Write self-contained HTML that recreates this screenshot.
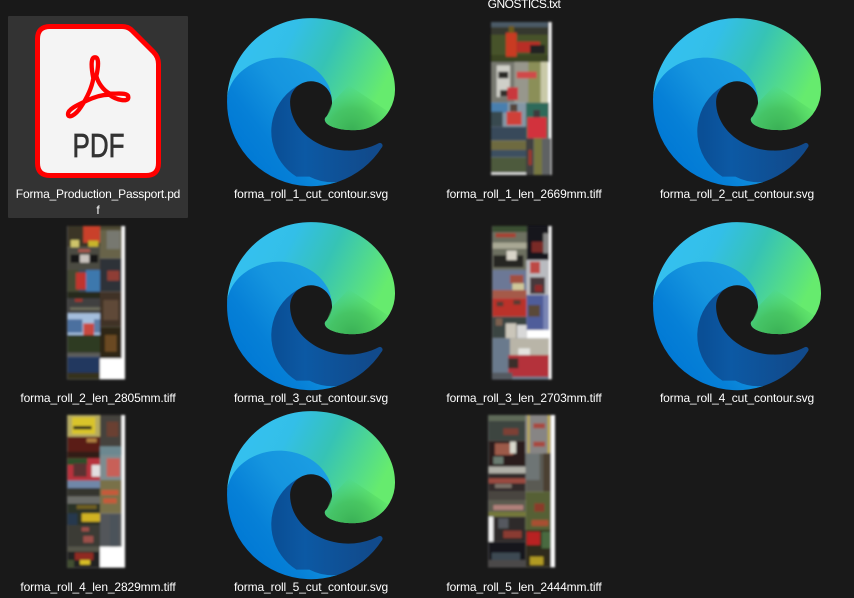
<!DOCTYPE html>
<html><head><meta charset="utf-8"><style>
html,body{margin:0;padding:0;background:#191919;width:854px;height:598px;overflow:hidden}
.l{position:absolute;width:200px;text-align:center;color:#fff;font:12px/16px "Liberation Sans",sans-serif;white-space:nowrap;letter-spacing:-.12px}
svg{position:absolute;overflow:visible}
.sel{position:absolute;left:8px;top:16px;width:180px;height:202px;background:#333;border-radius:1px}
</style></head><body>
<div class="sel"></div>
<svg width="0" height="0" style="left:0;top:0"><defs>
<linearGradient id="a" x1=".1" y1=".6" x2=".9" y2=".6"><stop offset="0" stop-color="#0a4f96"/><stop offset=".3" stop-color="#0c59a4"/><stop offset="1" stop-color="#114a8b"/></linearGradient>
<linearGradient id="b" x1=".9" y1=".25" x2=".2" y2=".9"><stop offset="0" stop-color="#1b9de2"/><stop offset=".35" stop-color="#1595df"/><stop offset=".7" stop-color="#0680d7"/><stop offset="1" stop-color="#0078d4"/></linearGradient>
<linearGradient id="c" x1=".05" y1=".25" x2=".95" y2=".55"><stop offset="0" stop-color="#35c1f1"/><stop offset=".3" stop-color="#33bfe8"/><stop offset=".58" stop-color="#36c3b5"/><stop offset="1" stop-color="#66eb6e"/></linearGradient>
<radialGradient id="g" cx="195" cy="178" r="72" gradientUnits="userSpaceOnUse"><stop offset="0" stop-color="#38ae55"/><stop offset=".5" stop-color="#42bd5a" stop-opacity=".75"/><stop offset="1" stop-color="#4fd566" stop-opacity="0"/></radialGradient>
<filter id="bl" x="-5%" y="-5%" width="110%" height="110%"><feGaussianBlur stdDeviation="3"/></filter>
<symbol id="edge" viewBox="4.6 4.6 256 256" overflow="visible">
<path fill="url(#a)" d="M235.7 195.5a93.7 93.7 0 0 1-10.6 4.7 101.9 101.9 0 0 1-35.9 6.4c-47.3 0-88.5-32.5-88.5-74.3a31.5 31.5 0 0 1 16.4-27.3c-42.8 1.8-53.8 46.4-53.8 72.5 0 73.9 68.1 81.4 82.8 81.4 7.9 0 19.8-2.3 27-4.6l1.3-.4a128.3 128.3 0 0 0 66.6-52.8 4 4 0 0 0-5.3-5.6Z"/>
<path fill="url(#b)" d="M110.3 246.3A79.2 79.2 0 0 1 87.6 225a80.7 80.7 0 0 1 29.5-120c3.2-1.5 8.5-4.1 15.6-4a32.4 32.4 0 0 1 25.7 13 31.9 31.9 0 0 1 6.3 18.7c0-.2 24.5-79.6-80-79.6-43.9 0-80 41.6-80 78.2a130.2 130.2 0 0 0 12.1 56 128 128 0 0 0 156.4 67 75.5 75.5 0 0 1-43-7.900Z"/>
<path fill="url(#c)" d="M157 153.8c-.9 1.1-3.4 2.6-3.4 5.7 0 2.6 1.7 5.2 4.8 7.3 14.3 10 41.4 8.6 41.5 8.6a59.5 59.5 0 0 0 30.3-8.3 61.4 61.4 0 0 0 30.4-52.9c.3-22.4-8-37.3-11.3-43.9C228 28.8 182.3 4.8 132.6 4.8 62.6 4.8 5.6 61 4.6 131c.5-36.5 36.8-66 80-66 3.5 0 23.5.3 42 10a72.6 72.6 0 0 1 30.9 29.3c6.1 10.6 7.2 24.1 7.2 29.5s-2.7 13.3-8 20.2Z"/>
<path fill="url(#g)" d="M157 153.8c-.9 1.1-3.4 2.6-3.4 5.7 0 2.6 1.7 5.2 4.8 7.3 14.3 10 41.4 8.6 41.5 8.6a59.5 59.5 0 0 0 30.3-8.3 61.4 61.4 0 0 0 20-20l-60-40-25 26Z"/>
</symbol></defs></svg>

<svg style="left:0;top:0" width="200" height="225" viewBox="0 0 200 225">
<path d="M50 26.500H122C126 26.500 129.500 28 132 30.500L153.500 52C157 55.500 158.500 59.500 158.500 64V163Q158.500 175.500 146 175.500H50Q37.500 175.500 37.500 163V39Q37.500 26.500 50 26.500Z" fill="#f4f4f4" stroke="#f00" stroke-width="5" stroke-linejoin="round"/>
<g transform="translate(60 50) scale(.33333)">
<path d="M105 22C118 22 115 52 109 78C114 98 130 122 150 131C172 132 205 126 205 142C205 158 168 150 148 134C125 134 100 142 78 153C50 166 24 178 24 192C24 206 45 198 62 172C80 145 95 115 100 85C93 50 92 22 105 22Z" fill="none" stroke="#f00" stroke-width="13" stroke-linejoin="round"/>
</g>
<text x="72.500" y="157" font-family="Liberation Sans,sans-serif" font-size="33" fill="#333" textLength="52" lengthAdjust="spacingAndGlyphs" stroke="#333" stroke-width=".7">PDF</text>
</svg>

<svg style="left:227px;top:18px" width="168" height="168"><use href="#edge" width="168" height="168"/></svg>
<svg style="left:653px;top:18px" width="168" height="168"><use href="#edge" width="168" height="168"/></svg>
<svg style="left:227px;top:222px" width="168" height="168"><use href="#edge" width="168" height="168"/></svg>
<svg style="left:653px;top:222px" width="168" height="168"><use href="#edge" width="168" height="168"/></svg>
<svg style="left:227px;top:411px" width="168" height="168"><use href="#edge" width="168" height="168"/></svg>

<!-- thumb row1 -->
<svg style="left:470px;top:0" width="100" height="185" viewBox="0 0 300 555"><g filter="url(#bl)">
<rect x="63" y="66" width="182" height="459" fill="#fff"/>
<rect x="63" y="66" width="174" height="120" fill="#46522a"/><rect x="63" y="66" width="174" height="16" fill="#4c5a66"/><rect x="63" y="82" width="174" height="22" fill="#35382f"/><rect x="63" y="165" width="174" height="21" fill="#3b4422"/>
<rect x="108" y="98" width="32" height="72" fill="#c93b22"/><rect x="116" y="78" width="16" height="20" fill="#6d5a1a"/><rect x="140" y="125" width="70" height="32" fill="#b82d25"/><rect x="180" y="135" width="45" height="26" fill="#222"/>
<rect x="63" y="186" width="170" height="122" fill="#97978c"/><rect x="63" y="186" width="70" height="122" fill="#777870"/><rect x="175" y="186" width="58" height="122" fill="#8b8f58"/><rect x="212" y="186" width="21" height="122" fill="#c9c9a8"/>
<rect x="80" y="196" width="40" height="95" fill="#cfcfc8"/><rect x="85" y="215" width="30" height="20" fill="#2a2a28"/><rect x="90" y="270" width="25" height="20" fill="#332f2b"/>
<rect x="140" y="215" width="60" height="20" fill="#d0484a"/><rect x="112" y="262" width="32" height="38" fill="#c9393c"/>
<rect x="63" y="308" width="105" height="72" fill="#8497a5"/><rect x="63" y="308" width="50" height="30" fill="#4a7fae"/><rect x="63" y="335" width="35" height="45" fill="#39494f"/><rect x="110" y="335" width="45" height="40" fill="#d04038"/><rect x="120" y="312" width="22" height="22" fill="#54443a"/>
<rect x="168" y="308" width="69" height="107" fill="#2e6a5a"/><rect x="172" y="352" width="58" height="63" fill="#d2333d"/><rect x="190" y="330" width="20" height="22" fill="#3d3a3c"/>
<rect x="63" y="380" width="105" height="42" fill="#394a5a"/><rect x="63" y="422" width="105" height="28" fill="#6e6a40"/>
<rect x="63" y="450" width="105" height="22" fill="#3e5060"/><rect x="63" y="472" width="105" height="46" fill="#4d5a3c"/><rect x="63" y="518" width="105" height="7" fill="#ddd"/>
<rect x="168" y="415" width="75" height="110" fill="#5e6264"/><rect x="192" y="415" width="24" height="110" fill="#76773f"/><rect x="168" y="415" width="22" height="110" fill="#3f3f40"/><rect x="176" y="450" width="9" height="45" fill="#a2352c"/>
</g></svg>

<!-- thumb row2 left -->
<svg style="left:50px;top:220px" width="90" height="170" viewBox="0 0 270 510"><g filter="url(#bl)">
<rect x="52" y="18" width="173" height="460" fill="#fff"/>
<rect x="52" y="18" width="98" height="64" fill="#3a3427"/><rect x="100" y="18" width="50" height="50" fill="#c9412a"/><rect x="62" y="60" width="25" height="22" fill="#cfc46a"/><rect x="115" y="62" width="30" height="18" fill="#c8b52c"/>
<rect x="52" y="82" width="98" height="68" fill="#4c4c42"/><rect x="62" y="104" width="82" height="24" fill="#151517"/><rect x="90" y="104" width="28" height="24" fill="#c9c3bd"/><rect x="85" y="88" width="35" height="8" fill="#b0584d"/>
<rect x="52" y="150" width="98" height="65" fill="#3b4a5c"/><rect x="52" y="150" width="35" height="65" fill="#444a30"/><rect x="78" y="158" width="30" height="50" fill="#c0362f"/><rect x="108" y="150" width="42" height="65" fill="#3e78ad"/>
<rect x="52" y="215" width="98" height="65" fill="#3f4040"/><rect x="52" y="215" width="98" height="20" fill="#28291f"/><rect x="75" y="237" width="22" height="8" fill="#a53329"/><rect x="60" y="262" width="90" height="8" fill="#6e6e5e"/>
<rect x="52" y="280" width="98" height="65" fill="#a4bedc"/><rect x="52" y="298" width="45" height="40" fill="#4c6f9f"/><rect x="100" y="310" width="32" height="35" fill="#c9493f"/><rect x="132" y="298" width="18" height="40" fill="#5d7da5"/>
<rect x="52" y="345" width="98" height="55" fill="#2e3a22"/><rect x="52" y="398" width="98" height="12" fill="#5c5c58"/>
<rect x="52" y="410" width="98" height="50" fill="#23395e"/><rect x="52" y="458" width="98" height="20" fill="#34321f"/>
<rect x="150" y="18" width="65" height="97" fill="#67634a"/><rect x="170" y="32" width="40" height="55" fill="#777870"/><rect x="150" y="18" width="65" height="12" fill="#4e4a30"/>
<rect x="150" y="115" width="65" height="100" fill="#2d3339"/><rect x="172" y="152" width="36" height="30" fill="#8f3c35"/>
<rect x="150" y="215" width="65" height="105" fill="#3f3025"/><rect x="160" y="240" width="45" height="60" fill="#5f4838"/>
<rect x="150" y="320" width="65" height="95" fill="#2e2618"/><rect x="165" y="345" width="35" height="50" fill="#6a4a22"/>
</g></svg>

<!-- thumb row2 mid -->
<svg style="left:475px;top:220px" width="90" height="170" viewBox="0 0 270 510"><g filter="url(#bl)">
<rect x="52" y="18" width="178" height="460" fill="#fff"/>
<rect x="52" y="18" width="103" height="132" fill="#6d7060"/><rect x="52" y="18" width="103" height="18" fill="#3b5030"/><rect x="62" y="40" width="60" height="12" fill="#a84030"/><rect x="52" y="68" width="103" height="18" fill="#a9a894"/><rect x="55" y="106" width="90" height="36" fill="#252523"/><rect x="95" y="92" width="30" height="28" fill="#d8d4c8"/>
<rect x="52" y="150" width="103" height="85" fill="#6c7896"/><rect x="105" y="165" width="40" height="25" fill="#a25040"/><rect x="112" y="190" width="35" height="30" fill="#cfc79a"/><rect x="52" y="210" width="103" height="25" fill="#a55a48"/>
<rect x="52" y="235" width="103" height="55" fill="#ba3329"/><rect x="65" y="245" width="20" height="14" fill="#5a3a30"/><rect x="115" y="240" width="22" height="14" fill="#5a3a30"/>
<rect x="52" y="290" width="103" height="65" fill="#3a4442"/><rect x="92" y="310" width="32" height="45" fill="#cbc6ba"/><rect x="126" y="315" width="29" height="40" fill="#d8d8d8"/><rect x="62" y="295" width="20" height="22" fill="#7b6150"/>
<rect x="52" y="355" width="170" height="123" fill="#6b7a8d"/><rect x="105" y="355" width="117" height="50" fill="#b9b5a8"/><rect x="130" y="385" width="35" height="22" fill="#e4e4e0"/><rect x="100" y="405" width="122" height="65" fill="#b4323a"/><rect x="100" y="415" width="30" height="30" fill="#3b2e2a"/><rect x="52" y="458" width="60" height="20" fill="#555a60"/>
<rect x="155" y="18" width="67" height="102" fill="#17171a"/><rect x="170" y="65" width="35" height="32" fill="#7a2b25"/><rect x="205" y="40" width="17" height="60" fill="#888"/>
<rect x="155" y="120" width="67" height="105" fill="#b9bbc0"/><rect x="165" y="125" width="30" height="35" fill="#bd4a45"/><rect x="165" y="172" width="45" height="50" fill="#46383a"/><rect x="180" y="195" width="22" height="20" fill="#8e2b2a"/>
<rect x="155" y="225" width="67" height="105" fill="#4f5d9a"/><rect x="160" y="255" width="35" height="35" fill="#5a4838"/><rect x="205" y="225" width="17" height="105" fill="#7a86b5"/>
</g></svg>

<!-- thumb row3 left -->
<svg style="left:50px;top:410px" width="90" height="165" viewBox="0 0 270 495"><g filter="url(#bl)">
<rect x="52" y="15" width="173" height="458" fill="#fff"/>
<rect x="52" y="15" width="98" height="65" fill="#b5ab60"/><rect x="66" y="22" width="70" height="50" fill="#d9c42c"/><rect x="70" y="48" width="55" height="10" fill="#26261c"/>
<rect x="52" y="80" width="98" height="65" fill="#5a1f13"/><rect x="110" y="85" width="30" height="12" fill="#b08040"/><rect x="52" y="125" width="98" height="20" fill="#331a12"/>
<rect x="52" y="145" width="98" height="67" fill="#b8333c"/><rect x="52" y="145" width="60" height="20" fill="#2f4f2c"/><rect x="70" y="160" width="40" height="40" fill="#5a3030"/><rect x="125" y="165" width="25" height="35" fill="#e3dfe0"/>
<rect x="52" y="212" width="98" height="68" fill="#6a6c68"/><rect x="52" y="212" width="98" height="22" fill="#6f87a8"/><rect x="52" y="234" width="98" height="25" fill="#36352e"/>
<rect x="52" y="280" width="98" height="65" fill="#2a3025"/><rect x="80" y="285" width="60" height="12" fill="#6e5f20"/><rect x="95" y="310" width="55" height="25" fill="#d1b223"/><rect x="52" y="310" width="30" height="35" fill="#26384e"/>
<rect x="52" y="345" width="98" height="65" fill="#3a3b36"/><rect x="95" y="352" width="22" height="12" fill="#a05048"/><rect x="100" y="378" width="30" height="20" fill="#9b504a"/>
<rect x="52" y="410" width="98" height="63" fill="#232320"/><rect x="52" y="410" width="98" height="15" fill="#54544a"/><rect x="75" y="428" width="55" height="22" fill="#902a22"/><rect x="90" y="450" width="30" height="14" fill="#d8c028"/><rect x="52" y="450" width="20" height="23" fill="#425030"/>
<rect x="150" y="15" width="65" height="95" fill="#44423c"/><rect x="170" y="35" width="35" height="45" fill="#6a4030"/>
<rect x="150" y="110" width="65" height="100" fill="#7d8c90"/><rect x="170" y="145" width="40" height="55" fill="#c86058"/><rect x="150" y="110" width="65" height="25" fill="#6c8890"/>
<rect x="150" y="210" width="65" height="100" fill="#79714a"/><rect x="155" y="240" width="50" height="15" fill="#c65a3a"/><rect x="160" y="265" width="40" height="15" fill="#c65a3a"/>
<rect x="150" y="310" width="65" height="100" fill="#53575a"/><rect x="180" y="315" width="25" height="95" fill="#4c525a"/>
</g></svg>

<!-- thumb row3 mid -->
<svg style="left:475px;top:410px" width="90" height="165" viewBox="0 0 270 495"><g filter="url(#bl)">
<rect x="40" y="15" width="200" height="457" fill="#fff"/>
<rect x="40" y="15" width="112" height="77" fill="#3e4540"/><rect x="40" y="15" width="112" height="18" fill="#5e6a58"/><rect x="85" y="55" width="45" height="20" fill="#7d3f36"/>
<rect x="40" y="92" width="112" height="73" fill="#2a1e1c"/><rect x="60" y="100" width="55" height="35" fill="#9c5a48"/><rect x="105" y="95" width="18" height="35" fill="#d8d8cc"/><rect x="55" y="140" width="30" height="22" fill="#6a7a70"/>
<rect x="40" y="165" width="112" height="80" fill="#322c2c"/><rect x="40" y="170" width="112" height="20" fill="#b0b0a8"/><rect x="40" y="205" width="112" height="15" fill="#9a4a40"/><rect x="60" y="222" width="50" height="12" fill="#7a7068"/>
<rect x="40" y="245" width="112" height="75" fill="#5b5c50"/><rect x="40" y="245" width="112" height="25" fill="#484440"/><rect x="55" y="285" width="90" height="15" fill="#b0807a"/><rect x="40" y="305" width="112" height="15" fill="#74783a"/>
<rect x="40" y="320" width="112" height="75" fill="#2d2a2a"/><rect x="40" y="320" width="15" height="75" fill="#f2f2f2"/><rect x="85" y="362" width="55" height="22" fill="#8a3a32"/><rect x="70" y="325" width="30" height="30" fill="#55595f"/>
<rect x="40" y="395" width="112" height="77" fill="#16161a"/><rect x="50" y="428" width="85" height="22" fill="#3d4a52"/><rect x="40" y="450" width="112" height="22" fill="#4b4a48"/>
<rect x="152" y="15" width="76" height="115" fill="#878584"/><rect x="158" y="15" width="6" height="115" fill="#c0ad50"/><rect x="218" y="15" width="8" height="115" fill="#c0ad50"/><rect x="175" y="40" width="35" height="15" fill="#a84a40"/><rect x="175" y="95" width="35" height="15" fill="#a84a40"/>
<rect x="152" y="130" width="76" height="115" fill="#5a5a52"/><rect x="152" y="130" width="42" height="80" fill="#6e7474"/><rect x="205" y="130" width="23" height="115" fill="#4c4030"/>
<rect x="152" y="245" width="76" height="115" fill="#566035"/><rect x="178" y="280" width="30" height="25" fill="#8a3a2c"/><rect x="170" y="330" width="50" height="18" fill="#a85030"/>
<rect x="152" y="360" width="76" height="112" fill="#2e2a1e"/><rect x="155" y="365" width="40" height="40" fill="#b82420"/><rect x="200" y="365" width="28" height="50" fill="#4a6a40"/><rect x="165" y="440" width="40" height="25" fill="#b09a20"/>
</g></svg>

<div class="l" style="left:424px;top:-4px;letter-spacing:-.5px">GNOSTICS.txt</div>
<div class="l" style="left:-2px;top:186px;letter-spacing:-.18px">Forma_Production_Passport.pd<br>f</div>
<div class="l" style="left:211px;top:186px">forma_roll_1_cut_contour.svg</div>
<div class="l" style="left:424px;top:186px">forma_roll_1_len_2669mm.tiff</div>
<div class="l" style="left:637px;top:186px">forma_roll_2_cut_contour.svg</div>
<div class="l" style="left:-2px;top:390px">forma_roll_2_len_2805mm.tiff</div>
<div class="l" style="left:211px;top:390px">forma_roll_3_cut_contour.svg</div>
<div class="l" style="left:424px;top:390px">forma_roll_3_len_2703mm.tiff</div>
<div class="l" style="left:637px;top:390px">forma_roll_4_cut_contour.svg</div>
<div class="l" style="left:-2px;top:579px">forma_roll_4_len_2829mm.tiff</div>
<div class="l" style="left:211px;top:579px">forma_roll_5_cut_contour.svg</div>
<div class="l" style="left:424px;top:579px">forma_roll_5_len_2444mm.tiff</div>
</body></html>
